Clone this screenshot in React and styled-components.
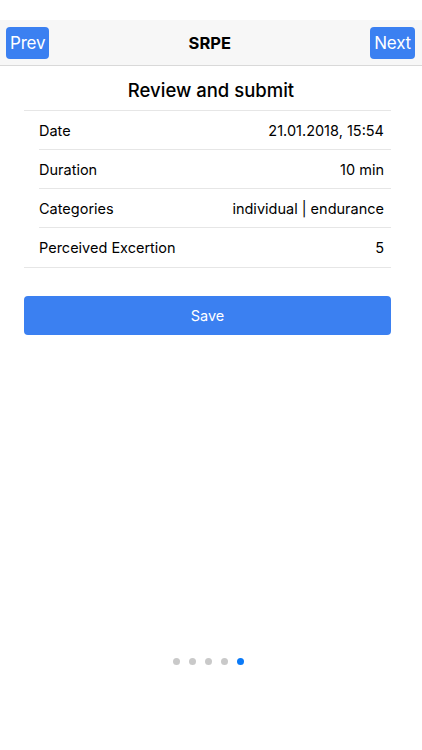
import styled, { createGlobalStyle } from "styled-components";

const GlobalStyle = createGlobalStyle`
  *, *::before, *::after {
    box-sizing: border-box;
  }
  html, body {
    margin: 0;
    padding: 0;
    background: #ffffff;
    font-family: Inter, "Noto Sans", "Liberation Sans", sans-serif;
    color: #000;
  }
`;

const Screen = styled.div`
  width: 422px;
  height: 750px;
  display: flex;
  flex-direction: column;
  background: #fff;
`;

const StatusSpace = styled.div`
  height: 20px;
`;

const NavBar = styled.div`
  height: 46px;
  background: #f7f7f7;
  border-bottom: 1px solid #d9d9d9;
  display: flex;
  align-items: center;
  justify-content: space-between;
  padding: 0 7px 0 6px;
`;

const NavButton = styled.button`
  height: 32px;
  padding: 0 4px;
  border: none;
  border-radius: 4px;
  background: #3b80f1;
  color: #fff;
  font-family: inherit;
  font-size: 17px;
  letter-spacing: -0.2px;
`;

const NavTitle = styled.div`
  font-size: 16.5px;
  font-weight: 700;
`;

const Content = styled.div`
  flex: 1;
  display: flex;
  flex-direction: column;
  padding: 0 31px 0 24px;
`;

const Heading = styled.div`
  height: 45px;
  display: flex;
  align-items: center;
  justify-content: center;
  font-size: 18.5px;
  font-weight: 500;
  border-bottom: 1px solid #e6e6e6;
  padding: 4px 0 0 7px;
`;

const List = styled.div`
  display: flex;
  flex-direction: column;
  border-bottom: 1px solid #e6e6e6;
`;

const Row = styled.div`
  height: 39px;
  margin-left: 15px;
  padding-right: 7px;
  display: flex;
  align-items: center;
  justify-content: space-between;
  font-size: 14.5px;
  border-bottom: ${(p) => (p.last ? "none" : "1px solid #e6e6e6")};
`;

const SaveButton = styled.button`
  margin-top: 28px;
  height: 39px;
  border: none;
  border-radius: 4px;
  background: #3b80f1;
  color: #fff;
  font-family: inherit;
  font-size: 14.5px;
`;

const Dots = styled.div`
  display: flex;
  justify-content: center;
  gap: 9px;
  padding: 0 6px 85px 0;
`;

const Dot = styled.span`
  width: 7px;
  height: 7px;
  border-radius: 50%;
  background: ${(p) => (p.active ? "#0a7af8" : "#c9c9c9")};
`;

const rows = [
  ["Date", "21.01.2018, 15:54"],
  ["Duration", "10 min"],
  ["Categories", "individual | endurance"],
  ["Perceived Excertion", "5"],
];

export default function App() {
  return (
    <>
      <GlobalStyle />
      <Screen>
        <StatusSpace />
        <NavBar>
          <NavButton>Prev</NavButton>
          <NavTitle>SRPE</NavTitle>
          <NavButton>Next</NavButton>
        </NavBar>
        <Content>
          <Heading>Review and submit</Heading>
          <List>
            {rows.map(([label, value], i) => (
              <Row key={label} last={i === rows.length - 1}>
                <span>{label}</span>
                <span>{value}</span>
              </Row>
            ))}
          </List>
          <SaveButton>Save</SaveButton>
        </Content>
        <Dots>
          {[0, 1, 2, 3, 4].map((i) => (
            <Dot key={i} active={i === 4} />
          ))}
        </Dots>
      </Screen>
    </>
  );
}
